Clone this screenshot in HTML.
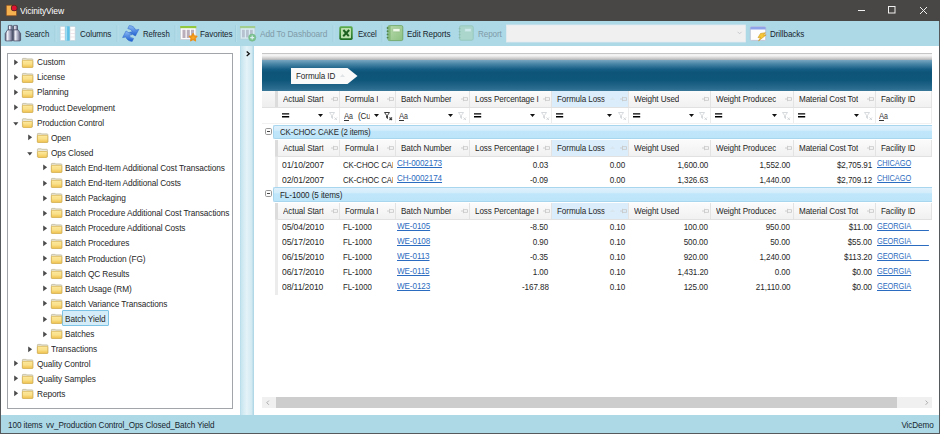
<!DOCTYPE html>
<html><head><meta charset="utf-8"><title>VicinityView</title>
<style>
html,body{margin:0;padding:0;}
body{width:940px;height:434px;overflow:hidden;position:relative;background:#fff;font-family:"Liberation Sans",sans-serif;font-size:9px;color:#272727;letter-spacing:-0.1px;}
.sx{transform:scaleX(0.9);transform-origin:0 50%;}
.sxr{transform:scaleX(0.9);transform-origin:100% 50%;}
.abs{position:absolute;}
svg{position:absolute;overflow:visible;}
#title{left:0;top:0;width:940px;height:20.7px;background:#494745;}
#title .t{left:20px;top:4.8px;color:#fff;font-size:9.5px;line-height:12px;letter-spacing:-0.1px;white-space:nowrap;transform:scaleX(0.895);transform-origin:0 50%;}
#toolbar{left:0;top:20.7px;width:940px;height:25.3px;background:#add8e6;}
.tb{position:absolute;top:7.4px;letter-spacing:-0.1px;transform:scaleX(0.9);transform-origin:0 50%;line-height:12px;white-space:nowrap;color:#17262e;}
.tb.dis{color:#7f9ba8;}
.tbsep{position:absolute;top:4px;width:1px;height:18px;background:#a2cedc;}
#status{left:0;top:415.4px;width:940px;height:19px;background:#add8e6;}
#status span{position:absolute;top:3.6px;line-height:12px;white-space:nowrap;color:#17262e;transform:scaleX(0.905);transform-origin:0 50%;}
#bl{left:0;top:20.7px;width:1px;height:413.3px;background:#55595c;}
#br{left:939px;top:20.7px;width:1px;height:413.3px;background:#55595c;}
#bb{left:0;top:433px;width:940px;height:1px;background:#55595c;}
#tree{left:7px;top:53px;width:224.4px;height:354px;border:1px solid #a2a5aa;background:#fff;}
.ti{position:absolute;line-height:12px;white-space:nowrap;transform:scaleX(0.92);transform-origin:0 50%;}
#sel{left:62px;top:310.4px;width:45px;height:14px;border-radius:1px;border:1px solid #7cc3e6;background:#d4ecf8;}
#split{left:240px;top:46px;width:14px;height:369px;background:linear-gradient(90deg,#b3dbe9 0%,#c9e6f0 10%,#e4f3f8 48%,#d3eaf2 82%,#a9d4e4 100%);}
#gtop{left:262px;top:53px;width:670px;height:7px;background:linear-gradient(180deg,#b4b4b4 0%,#d2d2d2 12%,#fafafa 24%,#ececec 46%,#cbcbcb 78%,#aab0b4 100%);}
#gpanel{left:262px;top:60px;width:670px;height:31px;background:linear-gradient(180deg,#78a6c0 0%,#4b87a8 12%,#155d84 30%,#0e5479 40%,#0f567b 65%,#2a6c8f 92%,#3b7898 100%);}
#chip{left:291px;top:67px;width:54px;height:17px;background:#fbfbfb;}
#chip span{position:absolute;left:5px;top:3px;line-height:12px;white-space:nowrap;}
.hrow{position:absolute;left:262px;width:670px;height:16px;background:linear-gradient(180deg,#fbfbfb 0%,#f1f1f1 100%);border-bottom:1px solid #e1e1e1;}
.hsel{position:absolute;top:0;height:16px;background:#dbedfa;}
.hind{position:absolute;left:0;top:0;width:14px;height:16px;background:linear-gradient(180deg,#f8f8f8,#eeeeee);}
.hind2{position:absolute;left:14px;top:0;width:2px;height:16px;background:#dcdcdc;}
.vs{position:absolute;top:0;width:1px;height:16px;background:#e3e3e3;}
.ht{position:absolute;top:2px;line-height:12px;white-space:nowrap;overflow:hidden;transform:scaleX(0.9);transform-origin:0 50%;}
.frow{position:absolute;left:262px;top:108px;width:670px;height:15px;background:#fff;border-bottom:1px solid #f1f1f1;}
.grow{position:absolute;left:273px;width:659px;height:13px;background:linear-gradient(180deg,#dff1fc 0%,#d4edfb 35%,#bfe6fb 45%,#bde5fa 100%);border:1px solid #a9d6ef;border-right:none;box-sizing:border-box;height:14.3px;border-radius:2px 0 0 2px;}
.grow span{position:absolute;left:6px;top:0px;line-height:12px;white-space:nowrap;transform:scaleX(0.9);transform-origin:0 50%;}
.c{position:absolute;line-height:12px;white-space:nowrap;transform:scaleX(0.9);transform-origin:0 50%;}
.r{text-align:right;transform-origin:100% 50%;}
.lnk{color:#2c6cc0;text-decoration:underline;}
.rowind{position:absolute;left:275px;width:3px;background:#ececec;}
.cellvs{position:absolute;width:1px;background:#f0f0f0;}
#sb{left:262px;top:397px;width:670px;height:11px;background:#f0f0f0;}
#sbt{left:276px;top:397px;width:621px;height:11px;background:#cdcdcd;}
</style></head>
<body>
<div id="title" class="abs"><span class="abs t">VicinityView</span>
<svg style="left:6px;top:4.6px" width="11" height="11" viewBox="0 0 11 11"><rect x="0.3" y="0.3" width="10.2" height="10.4" rx="0.8" fill="#f7b250" stroke="#8a4a1c" stroke-width="0.7"/><circle cx="8.2" cy="3" r="3.3" fill="#4a2820"/><circle cx="8.2" cy="3" r="2.5" fill="#e01232"/></svg>
<svg style="left:855px;top:4px" width="80" height="14" viewBox="0 0 80 14"><path d="M3 6.5h7" stroke="#f0f0f0" stroke-width="1"/><rect x="33.5" y="2.5" width="6.5" height="6.5" fill="none" stroke="#f0f0f0" stroke-width="1"/><path d="M65 3l7 7M72 3l-7 7" stroke="#f0f0f0" stroke-width="1"/></svg>
</div>
<div id="toolbar" class="abs">
<span class="tb" style="left:24.7px;transform:scaleX(0.865)">Search</span>
<span class="tb" style="left:80px">Columns</span>
<span class="tb" style="left:142.5px;transform:scaleX(0.865)">Refresh</span>
<span class="tb" style="left:200px">Favorites</span>
<span class="tb dis" style="left:259.5px;transform:scaleX(0.925)">Add To Dashboard</span>
<span class="tb" style="left:358px;transform:scaleX(0.865)">Excel</span>
<span class="tb" style="left:407px">Edit Reports</span>
<span class="tb dis" style="left:477.5px">Report</span>
<span class="tb" style="left:770px">Drillbacks</span>
</div>
<svg style="left:0;top:0" width="940" height="48" viewBox="0 0 940 48">
<defs>
<linearGradient id="gb" x1="0" x2="1" y1="0" y2="0"><stop offset="0" stop-color="#5d5f7a"/><stop offset="0.3" stop-color="#f0f0f8"/><stop offset="0.5" stop-color="#c3c4d6"/><stop offset="0.75" stop-color="#8c8ea8"/><stop offset="1" stop-color="#4c4e68"/></linearGradient>
<linearGradient id="gr" x1="0" x2="0" y1="0" y2="1"><stop offset="0" stop-color="#8dbdf6"/><stop offset="1" stop-color="#1f5fcf"/></linearGradient>
<linearGradient id="gx" x1="0" x2="0" y1="0" y2="1"><stop offset="0" stop-color="#5fae4e"/><stop offset="1" stop-color="#1d6b1f"/></linearGradient>
<linearGradient id="gn" x1="0" x2="1" y1="0" y2="1"><stop offset="0" stop-color="#b9dcae"/><stop offset="1" stop-color="#8dc081"/></linearGradient>
</defs>
<!-- binoculars -->
<g stroke="#45475f" stroke-width="0.7">
<path d="M8.8 25.4h3q.5 0 .5.5v4.2h-4v-4.2q0-.5.5-.5z" fill="url(#gb)"/>
<path d="M14 25.4h3q.5 0 .5.5v4.2h-4v-4.2q0-.5.5-.5z" fill="url(#gb)"/>
<path d="M7.6 29.9h4.9l.2 2v8.2q0 .8-.8.8h-5.9q-.8 0-.8-.8v-6.6z" fill="url(#gb)"/>
<path d="M18.2 29.9h-4.9l-.2 2v8.2q0 .8.8.8h5.9q.8 0 .8-.8v-6.6z" fill="url(#gb)"/>
</g>
<!-- columns -->
<g>
<rect x="60.2" y="26.5" width="4.9" height="14" rx="0.6" fill="#fefefe" stroke="#c0ced6" stroke-width="0.6"/>
<rect x="70" y="26.5" width="5.2" height="14" rx="0.6" fill="#fefefe" stroke="#c0ced6" stroke-width="0.6"/>
<path d="M60.5 30h4.4M60.5 33.5h4.4M60.5 37h4.4M70.3 30h4.6M70.3 33.5h4.6M70.3 37h4.6" stroke="#e6dbe0" stroke-width="0.7"/>
<rect x="65.5" y="26.3" width="4.1" height="14.4" fill="#5fc0e6"/>
<rect x="65.5" y="26.3" width="1.6" height="14.4" fill="#a2dcf1"/>
</g>
<!-- refresh -->
<g fill="url(#gr)" stroke="#2660c8" stroke-width="0.5" stroke-linejoin="round">
<path d="M129.2 25.6q4.6 0 6.4 4.4l3.2-0.6l-3.4 6.6l-6-3.6l3-0.8q-1.2-2.6-4.6-3z"/>
<path d="M132.2 41.4q-4.6 0-6.4-4.4l-3.2 0.6l3.4-6.6l6 3.6l-3 0.8q1.2 2.6 4.6 3z"/>
</g>
<!-- favorites -->
<g>
<rect x="180.5" y="26.5" width="15.5" height="13" fill="#fbfbfb" stroke="#c9cfd4" stroke-width="0.8"/>
<rect x="180.2" y="26" width="16.1" height="2.2" fill="#92c83e"/>
<rect x="182.5" y="29.8" width="3" height="8.2" fill="#b9aeba"/><rect x="186.8" y="29.8" width="3" height="8.2" fill="#b9aeba"/><rect x="191" y="29.8" width="3" height="8.2" fill="#b9aeba"/>
<path d="M193.1 33.6l1.2 2.4l2.6 0.4l-1.9 1.8l0.5 2.6l-2.4-1.3l-2.4 1.3l0.5-2.6l-1.9-1.8l2.6-0.4z" fill="#f9a422" stroke="#ea8f17" stroke-width="1.3" stroke-linejoin="round"/>
</g>
<!-- add to dashboard (disabled) -->
<g opacity="0.62">
<rect x="240.3" y="26.5" width="14.6" height="12.5" fill="#f4f8fa" stroke="#c0ccd2" stroke-width="0.8"/>
<rect x="240" y="26" width="15.2" height="2.2" fill="#9cca5a"/>
<rect x="242" y="29.8" width="2.8" height="7.6" fill="#bdb6c2"/><rect x="246" y="29.8" width="2.8" height="7.6" fill="#bdb6c2"/><rect x="250" y="29.8" width="2.8" height="7.6" fill="#bdb6c2"/>
<circle cx="252.2" cy="37.6" r="3.6" fill="#5fb75b" stroke="#49a04a" stroke-width="0.5"/>
<path d="M250.2 37.6h4M252.2 35.6v4" stroke="#fff" stroke-width="1.1"/>
</g>
<!-- excel -->
<g>
<rect x="339.3" y="26.3" width="13.4" height="13.6" rx="1.6" fill="url(#gx)"/>
<rect x="341" y="28" width="10" height="10.2" rx="0.8" fill="#b9dfab"/>
<path d="M343.4 30l5.4 6.2M349.2 30l-6 6.2" stroke="#1c5f1e" stroke-width="2"/>
</g>
<!-- edit reports -->
<g>
<rect x="388" y="25.6" width="14.8" height="15" rx="1.4" fill="url(#gn)" stroke="#6aa160" stroke-width="0.8"/>
<rect x="388.4" y="26" width="2.2" height="14.2" fill="#86b97b"/>
<rect x="392.8" y="28.4" width="7.2" height="3.4" rx="0.6" fill="#edf8e8" stroke="#86b67c" stroke-width="0.5"/>
<g fill="#4f8448"><circle cx="387.6" cy="28" r="0.95"/><circle cx="387.6" cy="31.2" r="0.95"/><circle cx="387.6" cy="34.4" r="0.95"/><circle cx="387.6" cy="37.6" r="0.95"/></g>
</g>
<!-- report (disabled) -->
<g opacity="0.5">
<rect x="459.6" y="25.8" width="13.6" height="14.4" rx="1.4" fill="#a9d6b4" stroke="#79b58b" stroke-width="0.8"/>
<rect x="464.6" y="28.4" width="6.6" height="3.4" rx="0.6" fill="#eefaf0" stroke="#9ccaa6" stroke-width="0.5"/>
<g fill="#6c9f7b"><circle cx="459.6" cy="28.6" r="0.9"/><circle cx="459.6" cy="31.6" r="0.9"/><circle cx="459.6" cy="34.6" r="0.9"/><circle cx="459.6" cy="37.6" r="0.9"/></g>
</g>
<!-- combobox -->
<rect x="506.5" y="25" width="239" height="17" fill="#f0f0f0" stroke="#e4ecef" stroke-width="0.8"/>
<path d="M737.6 31.8l2 2l2-2" fill="none" stroke="#bcc2c6" stroke-width="0.8"/>
<!-- drillbacks -->
<g>
<rect x="750.3" y="26.8" width="15.4" height="13.6" rx="1" fill="#fdfdfd" stroke="#b8bdd0" stroke-width="0.8"/>
<path d="M750.3 27.8q0-1 1-1h13.4q1 0 1 1v1.8h-15.4z" fill="#8ea3ea"/>
<path d="M760.5 33.5l5-0.8l-2 2.4l2.6-0.2l-7.5 6l2-3.6l-2.6 0.4z" fill="#f6c737" stroke="#c9951a" stroke-width="0.6"/>
</g>
<!-- separators -->
<g stroke="#a1cedc" stroke-width="0.8"><path d="M55 25v17M117 25v17M175 25v17M235.5 25v17M333 25v17M382 25v17"/></g>
<g stroke="#b9dfea" stroke-width="0.8"><path d="M56 25v17M118 25v17M176 25v17M236.5 25v17M334 25v17M383 25v17"/></g>
</svg>
<div id="tree" class="abs"></div>
<div id="sel" class="abs"></div>
<svg width="0" height="0" style="left:0;top:0"><defs><linearGradient id="fg" x1="0" x2="0" y1="0" y2="1"><stop offset="0" stop-color="#fdeca6"/><stop offset="0.5" stop-color="#f9dc80"/><stop offset="1" stop-color="#f3c654"/></linearGradient></defs></svg>
<svg style="left:13.8px;top:58.9px" width="5" height="7" viewBox="0 0 5 7"><path d="M0.2 0.4l3.9 2.9l-3.9 2.9z" fill="#4b4b4b"/></svg>
<svg style="left:22.0px;top:57.7px" width="11" height="10" viewBox="0 0 11 10"><path d="M0.4 9.2V1q0-.6.6-.6h3.2l.6.5h5.4q.6 0 .6.6V9.2z" fill="#ebe8da" stroke="#b9b190" stroke-width=".7"/><rect x="0.4" y="2.3" width="10.4" height="7.1" rx=".7" fill="url(#fg)" stroke="#d6ad47" stroke-width=".7"/><rect x="1.2" y="5.2" width="8.8" height="1.2" fill="#fbe596" opacity=".7"/></svg>
<span class="ti" style="left:36.5px;top:56.3px">Custom</span>
<svg style="left:13.8px;top:74.0px" width="5" height="7" viewBox="0 0 5 7"><path d="M0.2 0.4l3.9 2.9l-3.9 2.9z" fill="#4b4b4b"/></svg>
<svg style="left:22.0px;top:72.8px" width="11" height="10" viewBox="0 0 11 10"><path d="M0.4 9.2V1q0-.6.6-.6h3.2l.6.5h5.4q.6 0 .6.6V9.2z" fill="#ebe8da" stroke="#b9b190" stroke-width=".7"/><rect x="0.4" y="2.3" width="10.4" height="7.1" rx=".7" fill="url(#fg)" stroke="#d6ad47" stroke-width=".7"/><rect x="1.2" y="5.2" width="8.8" height="1.2" fill="#fbe596" opacity=".7"/></svg>
<span class="ti" style="left:36.5px;top:71.4px">License</span>
<svg style="left:13.8px;top:89.0px" width="5" height="7" viewBox="0 0 5 7"><path d="M0.2 0.4l3.9 2.9l-3.9 2.9z" fill="#4b4b4b"/></svg>
<svg style="left:22.0px;top:87.8px" width="11" height="10" viewBox="0 0 11 10"><path d="M0.4 9.2V1q0-.6.6-.6h3.2l.6.5h5.4q.6 0 .6.6V9.2z" fill="#ebe8da" stroke="#b9b190" stroke-width=".7"/><rect x="0.4" y="2.3" width="10.4" height="7.1" rx=".7" fill="url(#fg)" stroke="#d6ad47" stroke-width=".7"/><rect x="1.2" y="5.2" width="8.8" height="1.2" fill="#fbe596" opacity=".7"/></svg>
<span class="ti" style="left:36.5px;top:86.4px">Planning</span>
<svg style="left:13.8px;top:104.1px" width="5" height="7" viewBox="0 0 5 7"><path d="M0.2 0.4l3.9 2.9l-3.9 2.9z" fill="#4b4b4b"/></svg>
<svg style="left:22.0px;top:102.9px" width="11" height="10" viewBox="0 0 11 10"><path d="M0.4 9.2V1q0-.6.6-.6h3.2l.6.5h5.4q.6 0 .6.6V9.2z" fill="#ebe8da" stroke="#b9b190" stroke-width=".7"/><rect x="0.4" y="2.3" width="10.4" height="7.1" rx=".7" fill="url(#fg)" stroke="#d6ad47" stroke-width=".7"/><rect x="1.2" y="5.2" width="8.8" height="1.2" fill="#fbe596" opacity=".7"/></svg>
<span class="ti" style="left:36.5px;top:101.5px">Product Development</span>
<svg style="left:12.8px;top:121.5px" width="6" height="4" viewBox="0 0 6 4"><path d="M0.2 0.3h5.2l-2.6 3.3z" fill="#454545"/></svg>
<svg style="left:22.0px;top:118.0px" width="11" height="10" viewBox="0 0 11 10"><path d="M0.4 9V1.4q0-.6.6-.6h3.2l.6.5h5q.6 0 .6.6V9z" fill="#ebe8da" stroke="#b9b190" stroke-width=".7"/><path d="M0.5 4.3q0-.8.8-.8h8.2q.8 0 .8.8l-.3 4.4q0 .8-.8.8H1.6q-.8 0-.8-.8z" fill="url(#fg)" stroke="#d8b048" stroke-width=".7"/></svg>
<span class="ti" style="left:36.5px;top:116.6px">Production Control</span>
<svg style="left:28.2px;top:134.2px" width="5" height="7" viewBox="0 0 5 7"><path d="M0.2 0.4l3.9 2.9l-3.9 2.9z" fill="#4b4b4b"/></svg>
<svg style="left:36.5px;top:133.0px" width="11" height="10" viewBox="0 0 11 10"><path d="M0.4 9.2V1q0-.6.6-.6h3.2l.6.5h5.4q.6 0 .6.6V9.2z" fill="#ebe8da" stroke="#b9b190" stroke-width=".7"/><rect x="0.4" y="2.3" width="10.4" height="7.1" rx=".7" fill="url(#fg)" stroke="#d6ad47" stroke-width=".7"/><rect x="1.2" y="5.2" width="8.8" height="1.2" fill="#fbe596" opacity=".7"/></svg>
<span class="ti" style="left:51.0px;top:131.6px">Open</span>
<svg style="left:27.2px;top:151.6px" width="6" height="4" viewBox="0 0 6 4"><path d="M0.2 0.3h5.2l-2.6 3.3z" fill="#454545"/></svg>
<svg style="left:36.5px;top:148.1px" width="11" height="10" viewBox="0 0 11 10"><path d="M0.4 9V1.4q0-.6.6-.6h3.2l.6.5h5q.6 0 .6.6V9z" fill="#ebe8da" stroke="#b9b190" stroke-width=".7"/><path d="M0.5 4.3q0-.8.8-.8h8.2q.8 0 .8.8l-.3 4.4q0 .8-.8.8H1.6q-.8 0-.8-.8z" fill="url(#fg)" stroke="#d8b048" stroke-width=".7"/></svg>
<span class="ti" style="left:51.0px;top:146.7px">Ops Closed</span>
<svg style="left:42.7px;top:164.4px" width="5" height="7" viewBox="0 0 5 7"><path d="M0.2 0.4l3.9 2.9l-3.9 2.9z" fill="#4b4b4b"/></svg>
<svg style="left:50.9px;top:163.2px" width="11" height="10" viewBox="0 0 11 10"><path d="M0.4 9.2V1q0-.6.6-.6h3.2l.6.5h5.4q.6 0 .6.6V9.2z" fill="#ebe8da" stroke="#b9b190" stroke-width=".7"/><rect x="0.4" y="2.3" width="10.4" height="7.1" rx=".7" fill="url(#fg)" stroke="#d6ad47" stroke-width=".7"/><rect x="1.2" y="5.2" width="8.8" height="1.2" fill="#fbe596" opacity=".7"/></svg>
<span class="ti" style="left:65.4px;top:161.8px">Batch End-Item Additional Cost Transactions</span>
<svg style="left:42.7px;top:179.5px" width="5" height="7" viewBox="0 0 5 7"><path d="M0.2 0.4l3.9 2.9l-3.9 2.9z" fill="#4b4b4b"/></svg>
<svg style="left:50.9px;top:178.3px" width="11" height="10" viewBox="0 0 11 10"><path d="M0.4 9.2V1q0-.6.6-.6h3.2l.6.5h5.4q.6 0 .6.6V9.2z" fill="#ebe8da" stroke="#b9b190" stroke-width=".7"/><rect x="0.4" y="2.3" width="10.4" height="7.1" rx=".7" fill="url(#fg)" stroke="#d6ad47" stroke-width=".7"/><rect x="1.2" y="5.2" width="8.8" height="1.2" fill="#fbe596" opacity=".7"/></svg>
<span class="ti" style="left:65.4px;top:176.9px">Batch End-Item Additional Costs</span>
<svg style="left:42.7px;top:194.5px" width="5" height="7" viewBox="0 0 5 7"><path d="M0.2 0.4l3.9 2.9l-3.9 2.9z" fill="#4b4b4b"/></svg>
<svg style="left:50.9px;top:193.3px" width="11" height="10" viewBox="0 0 11 10"><path d="M0.4 9.2V1q0-.6.6-.6h3.2l.6.5h5.4q.6 0 .6.6V9.2z" fill="#ebe8da" stroke="#b9b190" stroke-width=".7"/><rect x="0.4" y="2.3" width="10.4" height="7.1" rx=".7" fill="url(#fg)" stroke="#d6ad47" stroke-width=".7"/><rect x="1.2" y="5.2" width="8.8" height="1.2" fill="#fbe596" opacity=".7"/></svg>
<span class="ti" style="left:65.4px;top:191.9px">Batch Packaging</span>
<svg style="left:42.7px;top:209.6px" width="5" height="7" viewBox="0 0 5 7"><path d="M0.2 0.4l3.9 2.9l-3.9 2.9z" fill="#4b4b4b"/></svg>
<svg style="left:50.9px;top:208.4px" width="11" height="10" viewBox="0 0 11 10"><path d="M0.4 9.2V1q0-.6.6-.6h3.2l.6.5h5.4q.6 0 .6.6V9.2z" fill="#ebe8da" stroke="#b9b190" stroke-width=".7"/><rect x="0.4" y="2.3" width="10.4" height="7.1" rx=".7" fill="url(#fg)" stroke="#d6ad47" stroke-width=".7"/><rect x="1.2" y="5.2" width="8.8" height="1.2" fill="#fbe596" opacity=".7"/></svg>
<span class="ti" style="left:65.4px;top:207.0px">Batch Procedure Additional Cost Transactions</span>
<svg style="left:42.7px;top:224.7px" width="5" height="7" viewBox="0 0 5 7"><path d="M0.2 0.4l3.9 2.9l-3.9 2.9z" fill="#4b4b4b"/></svg>
<svg style="left:50.9px;top:223.5px" width="11" height="10" viewBox="0 0 11 10"><path d="M0.4 9.2V1q0-.6.6-.6h3.2l.6.5h5.4q.6 0 .6.6V9.2z" fill="#ebe8da" stroke="#b9b190" stroke-width=".7"/><rect x="0.4" y="2.3" width="10.4" height="7.1" rx=".7" fill="url(#fg)" stroke="#d6ad47" stroke-width=".7"/><rect x="1.2" y="5.2" width="8.8" height="1.2" fill="#fbe596" opacity=".7"/></svg>
<span class="ti" style="left:65.4px;top:222.1px">Batch Procedure Additional Costs</span>
<svg style="left:42.7px;top:239.7px" width="5" height="7" viewBox="0 0 5 7"><path d="M0.2 0.4l3.9 2.9l-3.9 2.9z" fill="#4b4b4b"/></svg>
<svg style="left:50.9px;top:238.5px" width="11" height="10" viewBox="0 0 11 10"><path d="M0.4 9.2V1q0-.6.6-.6h3.2l.6.5h5.4q.6 0 .6.6V9.2z" fill="#ebe8da" stroke="#b9b190" stroke-width=".7"/><rect x="0.4" y="2.3" width="10.4" height="7.1" rx=".7" fill="url(#fg)" stroke="#d6ad47" stroke-width=".7"/><rect x="1.2" y="5.2" width="8.8" height="1.2" fill="#fbe596" opacity=".7"/></svg>
<span class="ti" style="left:65.4px;top:237.1px">Batch Procedures</span>
<svg style="left:42.7px;top:255.2px" width="5" height="7" viewBox="0 0 5 7"><path d="M0.2 0.4l3.9 2.9l-3.9 2.9z" fill="#4b4b4b"/></svg>
<svg style="left:50.9px;top:254.0px" width="11" height="10" viewBox="0 0 11 10"><path d="M0.4 9.2V1q0-.6.6-.6h3.2l.6.5h5.4q.6 0 .6.6V9.2z" fill="#ebe8da" stroke="#b9b190" stroke-width=".7"/><rect x="0.4" y="2.3" width="10.4" height="7.1" rx=".7" fill="url(#fg)" stroke="#d6ad47" stroke-width=".7"/><rect x="1.2" y="5.2" width="8.8" height="1.2" fill="#fbe596" opacity=".7"/></svg>
<span class="ti" style="left:65.4px;top:252.6px">Batch Production (FG)</span>
<svg style="left:42.7px;top:270.3px" width="5" height="7" viewBox="0 0 5 7"><path d="M0.2 0.4l3.9 2.9l-3.9 2.9z" fill="#4b4b4b"/></svg>
<svg style="left:50.9px;top:269.1px" width="11" height="10" viewBox="0 0 11 10"><path d="M0.4 9.2V1q0-.6.6-.6h3.2l.6.5h5.4q.6 0 .6.6V9.2z" fill="#ebe8da" stroke="#b9b190" stroke-width=".7"/><rect x="0.4" y="2.3" width="10.4" height="7.1" rx=".7" fill="url(#fg)" stroke="#d6ad47" stroke-width=".7"/><rect x="1.2" y="5.2" width="8.8" height="1.2" fill="#fbe596" opacity=".7"/></svg>
<span class="ti" style="left:65.4px;top:267.7px">Batch QC Results</span>
<svg style="left:42.7px;top:285.4px" width="5" height="7" viewBox="0 0 5 7"><path d="M0.2 0.4l3.9 2.9l-3.9 2.9z" fill="#4b4b4b"/></svg>
<svg style="left:50.9px;top:284.1px" width="11" height="10" viewBox="0 0 11 10"><path d="M0.4 9.2V1q0-.6.6-.6h3.2l.6.5h5.4q.6 0 .6.6V9.2z" fill="#ebe8da" stroke="#b9b190" stroke-width=".7"/><rect x="0.4" y="2.3" width="10.4" height="7.1" rx=".7" fill="url(#fg)" stroke="#d6ad47" stroke-width=".7"/><rect x="1.2" y="5.2" width="8.8" height="1.2" fill="#fbe596" opacity=".7"/></svg>
<span class="ti" style="left:65.4px;top:282.8px">Batch Usage (RM)</span>
<svg style="left:42.7px;top:300.4px" width="5" height="7" viewBox="0 0 5 7"><path d="M0.2 0.4l3.9 2.9l-3.9 2.9z" fill="#4b4b4b"/></svg>
<svg style="left:50.9px;top:299.2px" width="11" height="10" viewBox="0 0 11 10"><path d="M0.4 9.2V1q0-.6.6-.6h3.2l.6.5h5.4q.6 0 .6.6V9.2z" fill="#ebe8da" stroke="#b9b190" stroke-width=".7"/><rect x="0.4" y="2.3" width="10.4" height="7.1" rx=".7" fill="url(#fg)" stroke="#d6ad47" stroke-width=".7"/><rect x="1.2" y="5.2" width="8.8" height="1.2" fill="#fbe596" opacity=".7"/></svg>
<span class="ti" style="left:65.4px;top:297.8px">Batch Variance Transactions</span>
<svg style="left:42.7px;top:315.5px" width="5" height="7" viewBox="0 0 5 7"><path d="M0.2 0.4l3.9 2.9l-3.9 2.9z" fill="#4b4b4b"/></svg>
<svg style="left:50.9px;top:314.3px" width="11" height="10" viewBox="0 0 11 10"><path d="M0.4 9.2V1q0-.6.6-.6h3.2l.6.5h5.4q.6 0 .6.6V9.2z" fill="#ebe8da" stroke="#b9b190" stroke-width=".7"/><rect x="0.4" y="2.3" width="10.4" height="7.1" rx=".7" fill="url(#fg)" stroke="#d6ad47" stroke-width=".7"/><rect x="1.2" y="5.2" width="8.8" height="1.2" fill="#fbe596" opacity=".7"/></svg>
<span class="ti" style="left:65.4px;top:312.9px">Batch Yield</span>
<svg style="left:42.7px;top:330.6px" width="5" height="7" viewBox="0 0 5 7"><path d="M0.2 0.4l3.9 2.9l-3.9 2.9z" fill="#4b4b4b"/></svg>
<svg style="left:50.9px;top:329.4px" width="11" height="10" viewBox="0 0 11 10"><path d="M0.4 9.2V1q0-.6.6-.6h3.2l.6.5h5.4q.6 0 .6.6V9.2z" fill="#ebe8da" stroke="#b9b190" stroke-width=".7"/><rect x="0.4" y="2.3" width="10.4" height="7.1" rx=".7" fill="url(#fg)" stroke="#d6ad47" stroke-width=".7"/><rect x="1.2" y="5.2" width="8.8" height="1.2" fill="#fbe596" opacity=".7"/></svg>
<span class="ti" style="left:65.4px;top:328.0px">Batches</span>
<svg style="left:28.2px;top:345.6px" width="5" height="7" viewBox="0 0 5 7"><path d="M0.2 0.4l3.9 2.9l-3.9 2.9z" fill="#4b4b4b"/></svg>
<svg style="left:36.5px;top:344.4px" width="11" height="10" viewBox="0 0 11 10"><path d="M0.4 9.2V1q0-.6.6-.6h3.2l.6.5h5.4q.6 0 .6.6V9.2z" fill="#ebe8da" stroke="#b9b190" stroke-width=".7"/><rect x="0.4" y="2.3" width="10.4" height="7.1" rx=".7" fill="url(#fg)" stroke="#d6ad47" stroke-width=".7"/><rect x="1.2" y="5.2" width="8.8" height="1.2" fill="#fbe596" opacity=".7"/></svg>
<span class="ti" style="left:51.0px;top:343.0px">Transactions</span>
<svg style="left:13.8px;top:360.3px" width="5" height="7" viewBox="0 0 5 7"><path d="M0.2 0.4l3.9 2.9l-3.9 2.9z" fill="#4b4b4b"/></svg>
<svg style="left:22.0px;top:359.1px" width="11" height="10" viewBox="0 0 11 10"><path d="M0.4 9.2V1q0-.6.6-.6h3.2l.6.5h5.4q.6 0 .6.6V9.2z" fill="#ebe8da" stroke="#b9b190" stroke-width=".7"/><rect x="0.4" y="2.3" width="10.4" height="7.1" rx=".7" fill="url(#fg)" stroke="#d6ad47" stroke-width=".7"/><rect x="1.2" y="5.2" width="8.8" height="1.2" fill="#fbe596" opacity=".7"/></svg>
<span class="ti" style="left:36.5px;top:357.7px">Quality Control</span>
<svg style="left:13.8px;top:375.4px" width="5" height="7" viewBox="0 0 5 7"><path d="M0.2 0.4l3.9 2.9l-3.9 2.9z" fill="#4b4b4b"/></svg>
<svg style="left:22.0px;top:374.2px" width="11" height="10" viewBox="0 0 11 10"><path d="M0.4 9.2V1q0-.6.6-.6h3.2l.6.5h5.4q.6 0 .6.6V9.2z" fill="#ebe8da" stroke="#b9b190" stroke-width=".7"/><rect x="0.4" y="2.3" width="10.4" height="7.1" rx=".7" fill="url(#fg)" stroke="#d6ad47" stroke-width=".7"/><rect x="1.2" y="5.2" width="8.8" height="1.2" fill="#fbe596" opacity=".7"/></svg>
<span class="ti" style="left:36.5px;top:372.8px">Quality Samples</span>
<svg style="left:13.8px;top:390.4px" width="5" height="7" viewBox="0 0 5 7"><path d="M0.2 0.4l3.9 2.9l-3.9 2.9z" fill="#4b4b4b"/></svg>
<svg style="left:22.0px;top:389.2px" width="11" height="10" viewBox="0 0 11 10"><path d="M0.4 9.2V1q0-.6.6-.6h3.2l.6.5h5.4q.6 0 .6.6V9.2z" fill="#ebe8da" stroke="#b9b190" stroke-width=".7"/><rect x="0.4" y="2.3" width="10.4" height="7.1" rx=".7" fill="url(#fg)" stroke="#d6ad47" stroke-width=".7"/><rect x="1.2" y="5.2" width="8.8" height="1.2" fill="#fbe596" opacity=".7"/></svg>
<span class="ti" style="left:36.5px;top:387.8px">Reports</span>
<div id="split" class="abs"></div>
<svg style="left:245.6px;top:50.8px" width="5" height="6" viewBox="0 0 5 6"><path d="M0.7 0.6l2.6 2.2l-2.6 2.2" fill="none" stroke="#111" stroke-width="1.3"/></svg>
<div id="gtop" class="abs"></div><div id="gpanel" class="abs"></div>
<svg style="left:291px;top:67.6px" width="67" height="16" viewBox="0 0 67 16"><path d="M0 0h56.5l10 8l-10 8h-56.5z" fill="#fafafa"/></svg>
<span class="c" style="left:296px;top:69.5px">Formula ID</span>
<svg style="left:340px;top:74px" width="5" height="3" viewBox="0 0 5 3"><path d="M0 3l2.5-3l2.5 3z" fill="#e1e4e7"/></svg>
<div class="hrow" style="top:91px;left:262px;width:670px">
<div class="hind"></div><div class="hind2" style="left:13px;width:3px"></div>
<div class="vs" style="left:77.1px"></div>
<span class="ht" style="left:21.0px;max-width:52px">Actual Start</span>
<svg style="left:68.8px;top:5px" width="7" height="6" viewBox="0 0 7 6"><path d="M0 3h2.5M2.5 0.8v4.4M2.5 1.6h4v2.8h-4" fill="none" stroke="#c6c6c6" stroke-width="0.8"/></svg>
<div class="vs" style="left:132.8px"></div>
<span class="ht" style="left:83.0px;max-width:45px">Formula I</span>
<svg style="left:124.5px;top:5px" width="7" height="6" viewBox="0 0 7 6"><path d="M0 3h2.5M2.5 0.8v4.4M2.5 1.6h4v2.8h-4" fill="none" stroke="#c6c6c6" stroke-width="0.8"/></svg>
<div class="vs" style="left:206.8px"></div>
<span class="ht" style="left:138.7px;max-width:65px">Batch Number</span>
<svg style="left:198.5px;top:5px" width="7" height="6" viewBox="0 0 7 6"><path d="M0 3h2.5M2.5 0.8v4.4M2.5 1.6h4v2.8h-4" fill="none" stroke="#c6c6c6" stroke-width="0.8"/></svg>
<div class="vs" style="left:289.3px"></div>
<span class="ht" style="left:212.7px;max-width:75px">Loss Percentage I</span>
<svg style="left:281.0px;top:5px" width="7" height="6" viewBox="0 0 7 6"><path d="M0 3h2.5M2.5 0.8v4.4M2.5 1.6h4v2.8h-4" fill="none" stroke="#c6c6c6" stroke-width="0.8"/></svg>
<div class="hsel" style="left:290.2px;width:76.4px"></div>
<svg style="left:347.5px;top:6px" width="5" height="3" viewBox="0 0 5 3"><path d="M0 3l2.5-3l2.5 3z" fill="#d9e6ef"/></svg>
<div class="vs" style="left:366.1px"></div>
<span class="ht" style="left:295.2px;max-width:68px">Formula Loss</span>
<svg style="left:357.8px;top:5px" width="7" height="6" viewBox="0 0 7 6"><path d="M0 3h2.5M2.5 0.8v4.4M2.5 1.6h4v2.8h-4" fill="none" stroke="#c6c6c6" stroke-width="0.8"/></svg>
<div class="vs" style="left:447.9px"></div>
<span class="ht" style="left:372.0px;max-width:74px">Weight Used</span>
<svg style="left:439.6px;top:5px" width="7" height="6" viewBox="0 0 7 6"><path d="M0 3h2.5M2.5 0.8v4.4M2.5 1.6h4v2.8h-4" fill="none" stroke="#c6c6c6" stroke-width="0.8"/></svg>
<div class="vs" style="left:530.9px"></div>
<span class="ht" style="left:453.8px;max-width:75px">Weight Producec</span>
<svg style="left:522.6px;top:5px" width="7" height="6" viewBox="0 0 7 6"><path d="M0 3h2.5M2.5 0.8v4.4M2.5 1.6h4v2.8h-4" fill="none" stroke="#c6c6c6" stroke-width="0.8"/></svg>
<div class="vs" style="left:612.8px"></div>
<span class="ht" style="left:536.8px;max-width:74px">Material Cost Tot</span>
<svg style="left:604.5px;top:5px" width="7" height="6" viewBox="0 0 7 6"><path d="M0 3h2.5M2.5 0.8v4.4M2.5 1.6h4v2.8h-4" fill="none" stroke="#c6c6c6" stroke-width="0.8"/></svg>
<div class="vs" style="left:669.1px"></div>
<span class="ht" style="left:618.7px;max-width:60px">Facility ID</span>
</div>
<div class="frow">
<div class="vs" style="left:77.1px;height:15px;background:#ececec"></div>
<svg style="left:19.8px;top:5.4px" width="8" height="5" viewBox="0 0 8 5"><path d="M0 0.9h7.2M0 3.7h7.2" stroke="#000" stroke-width="1.4"/></svg>
<svg style="left:56.0px;top:6px" width="5" height="3" viewBox="0 0 5 3"><path d="M0 0h5l-2.5 3z" fill="#111"/></svg>
<svg style="left:66.5px;top:4.2px" width="9" height="9" viewBox="0 0 9 9"><path d="M0.5 0.5h5l-2 2.8v3.2l-1 -0.8v-2.4z" fill="none" stroke="#cdd1d4" stroke-width="0.8"/><path d="M5.5 5.5l2.5 2.5M8 5.5l-2.5 2.5" stroke="#cdd1d4" stroke-width="0.9"/></svg>
<div class="vs" style="left:132.8px;height:15px;background:#ececec"></div>
<span class="c" style="left:81.5px;top:1.5px;font-size:9.5px;letter-spacing:-0.3px;color:#333;transform:scaleX(0.82)"><u>A</u><span style="font-size:8.5px">a</span></span>
<span class="c" style="left:95.5px;top:1.5px;max-width:13px;overflow:hidden">(Cu</span>
<svg style="left:111.7px;top:6px" width="5" height="3" viewBox="0 0 5 3"><path d="M0 0h5l-2.5 3z" fill="#111"/></svg>
<svg style="left:122.2px;top:4.2px" width="9" height="9" viewBox="0 0 9 9"><path d="M0.5 0.5h5l-2 2.8v3.2l-1 -0.8v-2.4z" fill="none" stroke="#3d3d3d" stroke-width="1"/><path d="M5.5 5.5l2.5 2.5M8 5.5l-2.5 2.5" stroke="#3d3d3d" stroke-width="1.1"/></svg>
<div class="vs" style="left:206.8px;height:15px;background:#ececec"></div>
<span class="c" style="left:137.2px;top:1.5px;font-size:9.5px;letter-spacing:-0.3px;color:#333;transform:scaleX(0.82)"><u>A</u><span style="font-size:8.5px">a</span></span>
<svg style="left:185.7px;top:6px" width="5" height="3" viewBox="0 0 5 3"><path d="M0 0h5l-2.5 3z" fill="#111"/></svg>
<svg style="left:196.2px;top:4.2px" width="9" height="9" viewBox="0 0 9 9"><path d="M0.5 0.5h5l-2 2.8v3.2l-1 -0.8v-2.4z" fill="none" stroke="#cdd1d4" stroke-width="0.8"/><path d="M5.5 5.5l2.5 2.5M8 5.5l-2.5 2.5" stroke="#cdd1d4" stroke-width="0.9"/></svg>
<div class="vs" style="left:289.3px;height:15px;background:#ececec"></div>
<svg style="left:211.5px;top:5.4px" width="8" height="5" viewBox="0 0 8 5"><path d="M0 0.9h7.2M0 3.7h7.2" stroke="#000" stroke-width="1.4"/></svg>
<svg style="left:268.2px;top:6px" width="5" height="3" viewBox="0 0 5 3"><path d="M0 0h5l-2.5 3z" fill="#111"/></svg>
<svg style="left:278.7px;top:4.2px" width="9" height="9" viewBox="0 0 9 9"><path d="M0.5 0.5h5l-2 2.8v3.2l-1 -0.8v-2.4z" fill="none" stroke="#cdd1d4" stroke-width="0.8"/><path d="M5.5 5.5l2.5 2.5M8 5.5l-2.5 2.5" stroke="#cdd1d4" stroke-width="0.9"/></svg>
<div class="vs" style="left:366.1px;height:15px;background:#ececec"></div>
<svg style="left:294.0px;top:5.4px" width="8" height="5" viewBox="0 0 8 5"><path d="M0 0.9h7.2M0 3.7h7.2" stroke="#000" stroke-width="1.4"/></svg>
<svg style="left:345.0px;top:6px" width="5" height="3" viewBox="0 0 5 3"><path d="M0 0h5l-2.5 3z" fill="#111"/></svg>
<svg style="left:355.5px;top:4.2px" width="9" height="9" viewBox="0 0 9 9"><path d="M0.5 0.5h5l-2 2.8v3.2l-1 -0.8v-2.4z" fill="none" stroke="#cdd1d4" stroke-width="0.8"/><path d="M5.5 5.5l2.5 2.5M8 5.5l-2.5 2.5" stroke="#cdd1d4" stroke-width="0.9"/></svg>
<div class="vs" style="left:447.9px;height:15px;background:#ececec"></div>
<svg style="left:370.8px;top:5.4px" width="8" height="5" viewBox="0 0 8 5"><path d="M0 0.9h7.2M0 3.7h7.2" stroke="#000" stroke-width="1.4"/></svg>
<svg style="left:426.8px;top:6px" width="5" height="3" viewBox="0 0 5 3"><path d="M0 0h5l-2.5 3z" fill="#111"/></svg>
<svg style="left:437.3px;top:4.2px" width="9" height="9" viewBox="0 0 9 9"><path d="M0.5 0.5h5l-2 2.8v3.2l-1 -0.8v-2.4z" fill="none" stroke="#cdd1d4" stroke-width="0.8"/><path d="M5.5 5.5l2.5 2.5M8 5.5l-2.5 2.5" stroke="#cdd1d4" stroke-width="0.9"/></svg>
<div class="vs" style="left:530.9px;height:15px;background:#ececec"></div>
<svg style="left:452.6px;top:5.4px" width="8" height="5" viewBox="0 0 8 5"><path d="M0 0.9h7.2M0 3.7h7.2" stroke="#000" stroke-width="1.4"/></svg>
<svg style="left:509.8px;top:6px" width="5" height="3" viewBox="0 0 5 3"><path d="M0 0h5l-2.5 3z" fill="#111"/></svg>
<svg style="left:520.3px;top:4.2px" width="9" height="9" viewBox="0 0 9 9"><path d="M0.5 0.5h5l-2 2.8v3.2l-1 -0.8v-2.4z" fill="none" stroke="#cdd1d4" stroke-width="0.8"/><path d="M5.5 5.5l2.5 2.5M8 5.5l-2.5 2.5" stroke="#cdd1d4" stroke-width="0.9"/></svg>
<div class="vs" style="left:612.8px;height:15px;background:#ececec"></div>
<svg style="left:535.6px;top:5.4px" width="8" height="5" viewBox="0 0 8 5"><path d="M0 0.9h7.2M0 3.7h7.2" stroke="#000" stroke-width="1.4"/></svg>
<svg style="left:591.7px;top:6px" width="5" height="3" viewBox="0 0 5 3"><path d="M0 0h5l-2.5 3z" fill="#111"/></svg>
<svg style="left:602.2px;top:4.2px" width="9" height="9" viewBox="0 0 9 9"><path d="M0.5 0.5h5l-2 2.8v3.2l-1 -0.8v-2.4z" fill="none" stroke="#cdd1d4" stroke-width="0.8"/><path d="M5.5 5.5l2.5 2.5M8 5.5l-2.5 2.5" stroke="#cdd1d4" stroke-width="0.9"/></svg>
<div class="vs" style="left:669.1px;height:15px;background:#ececec"></div>
<span class="c" style="left:617.2px;top:1.5px;font-size:9.5px;letter-spacing:-0.3px;color:#333;transform:scaleX(0.82)"><u>A</u><span style="font-size:8.5px">a</span></span>
</div>
<svg style="left:265px;top:127.7px" width="7" height="7" viewBox="0 0 7 7"><rect x="0.5" y="0.5" width="6" height="6" rx="1.2" fill="#fdfdfd" stroke="#8c8c8c" stroke-width="0.9"/><path d="M2 3.5h3" stroke="#333" stroke-width="0.9"/></svg>
<div class="grow" style="top:124.7px"><span style="transform:scaleX(0.868);top:0.2px">CK-CHOC CAKE (2 items)</span></div>
<div class="hrow" style="top:140px;left:275px;width:657px">
<div class="hind2" style="left:0;width:3px"></div>
<div class="vs" style="left:64.1px"></div>
<span class="ht" style="left:8.0px;max-width:52px">Actual Start</span>
<svg style="left:55.8px;top:5px" width="7" height="6" viewBox="0 0 7 6"><path d="M0 3h2.5M2.5 0.8v4.4M2.5 1.6h4v2.8h-4" fill="none" stroke="#c6c6c6" stroke-width="0.8"/></svg>
<div class="vs" style="left:119.8px"></div>
<span class="ht" style="left:70.0px;max-width:45px">Formula I</span>
<svg style="left:111.5px;top:5px" width="7" height="6" viewBox="0 0 7 6"><path d="M0 3h2.5M2.5 0.8v4.4M2.5 1.6h4v2.8h-4" fill="none" stroke="#c6c6c6" stroke-width="0.8"/></svg>
<div class="vs" style="left:193.8px"></div>
<span class="ht" style="left:125.7px;max-width:65px">Batch Number</span>
<svg style="left:185.5px;top:5px" width="7" height="6" viewBox="0 0 7 6"><path d="M0 3h2.5M2.5 0.8v4.4M2.5 1.6h4v2.8h-4" fill="none" stroke="#c6c6c6" stroke-width="0.8"/></svg>
<div class="vs" style="left:276.3px"></div>
<span class="ht" style="left:199.7px;max-width:75px">Loss Percentage I</span>
<svg style="left:268.0px;top:5px" width="7" height="6" viewBox="0 0 7 6"><path d="M0 3h2.5M2.5 0.8v4.4M2.5 1.6h4v2.8h-4" fill="none" stroke="#c6c6c6" stroke-width="0.8"/></svg>
<div class="hsel" style="left:277.2px;width:76.4px"></div>
<svg style="left:334.5px;top:6px" width="5" height="3" viewBox="0 0 5 3"><path d="M0 3l2.5-3l2.5 3z" fill="#d9e6ef"/></svg>
<div class="vs" style="left:353.1px"></div>
<span class="ht" style="left:282.2px;max-width:68px">Formula Loss</span>
<svg style="left:344.8px;top:5px" width="7" height="6" viewBox="0 0 7 6"><path d="M0 3h2.5M2.5 0.8v4.4M2.5 1.6h4v2.8h-4" fill="none" stroke="#c6c6c6" stroke-width="0.8"/></svg>
<div class="vs" style="left:434.9px"></div>
<span class="ht" style="left:359.0px;max-width:74px">Weight Used</span>
<svg style="left:426.6px;top:5px" width="7" height="6" viewBox="0 0 7 6"><path d="M0 3h2.5M2.5 0.8v4.4M2.5 1.6h4v2.8h-4" fill="none" stroke="#c6c6c6" stroke-width="0.8"/></svg>
<div class="vs" style="left:517.9px"></div>
<span class="ht" style="left:440.8px;max-width:75px">Weight Producec</span>
<svg style="left:509.6px;top:5px" width="7" height="6" viewBox="0 0 7 6"><path d="M0 3h2.5M2.5 0.8v4.4M2.5 1.6h4v2.8h-4" fill="none" stroke="#c6c6c6" stroke-width="0.8"/></svg>
<div class="vs" style="left:599.8px"></div>
<span class="ht" style="left:523.8px;max-width:74px">Material Cost Tot</span>
<svg style="left:591.5px;top:5px" width="7" height="6" viewBox="0 0 7 6"><path d="M0 3h2.5M2.5 0.8v4.4M2.5 1.6h4v2.8h-4" fill="none" stroke="#c6c6c6" stroke-width="0.8"/></svg>
<div class="vs" style="left:656.1px"></div>
<span class="ht" style="left:605.7px;max-width:60px">Facility ID</span>
</div>
<span class="c" style="left:282px;top:158.5px;transform:scaleX(0.95)">01/10/2007</span>
<span class="c" style="left:342.8px;top:158.5px;max-width:57px;overflow:hidden;transform:scaleX(0.875)">CK-CHOC CAKE</span>
<span class="c lnk" style="left:397px;top:156.9px">CH-0002173</span>
<span class="c r" style="right:391.5px;top:158.5px">0.03</span>
<span class="c r" style="right:314.5px;top:158.5px">0.00</span>
<span class="c r" style="right:232.0px;top:158.5px">1,600.00</span>
<span class="c r" style="right:150.0px;top:158.5px">1,552.00</span>
<span class="c r" style="right:68.0px;top:158.5px">$2,705.91</span>
<span class="c lnk" style="left:877px;top:157.0px;transform:scaleX(0.825)">CHICAGO</span>
<span class="c" style="left:282px;top:173.5px;transform:scaleX(0.95)">02/01/2007</span>
<span class="c" style="left:342.8px;top:173.5px;max-width:57px;overflow:hidden;transform:scaleX(0.875)">CK-CHOC CAKE</span>
<span class="c lnk" style="left:397px;top:171.9px">CH-0002174</span>
<span class="c r" style="right:391.5px;top:173.5px">-0.09</span>
<span class="c r" style="right:314.5px;top:173.5px">0.00</span>
<span class="c r" style="right:232.0px;top:173.5px">1,326.63</span>
<span class="c r" style="right:150.0px;top:173.5px">1,440.00</span>
<span class="c r" style="right:68.0px;top:173.5px">$2,709.12</span>
<span class="c lnk" style="left:877px;top:172.0px;transform:scaleX(0.825)">CHICAGO</span>
<svg style="left:265px;top:190.3px" width="7" height="7" viewBox="0 0 7 7"><rect x="0.5" y="0.5" width="6" height="6" rx="1.2" fill="#fdfdfd" stroke="#8c8c8c" stroke-width="0.9"/><path d="M2 3.5h3" stroke="#333" stroke-width="0.9"/></svg>
<div class="grow" style="top:187.3px"><span style="transform:scaleX(0.9);top:0.7px">FL-1000 (5 items)</span></div>
<div class="hrow" style="top:203px;left:275px;width:657px">
<div class="hind2" style="left:0;width:3px"></div>
<div class="vs" style="left:64.1px"></div>
<span class="ht" style="left:8.0px;max-width:52px">Actual Start</span>
<svg style="left:55.8px;top:5px" width="7" height="6" viewBox="0 0 7 6"><path d="M0 3h2.5M2.5 0.8v4.4M2.5 1.6h4v2.8h-4" fill="none" stroke="#c6c6c6" stroke-width="0.8"/></svg>
<div class="vs" style="left:119.8px"></div>
<span class="ht" style="left:70.0px;max-width:45px">Formula I</span>
<svg style="left:111.5px;top:5px" width="7" height="6" viewBox="0 0 7 6"><path d="M0 3h2.5M2.5 0.8v4.4M2.5 1.6h4v2.8h-4" fill="none" stroke="#c6c6c6" stroke-width="0.8"/></svg>
<div class="vs" style="left:193.8px"></div>
<span class="ht" style="left:125.7px;max-width:65px">Batch Number</span>
<svg style="left:185.5px;top:5px" width="7" height="6" viewBox="0 0 7 6"><path d="M0 3h2.5M2.5 0.8v4.4M2.5 1.6h4v2.8h-4" fill="none" stroke="#c6c6c6" stroke-width="0.8"/></svg>
<div class="vs" style="left:276.3px"></div>
<span class="ht" style="left:199.7px;max-width:75px">Loss Percentage I</span>
<svg style="left:268.0px;top:5px" width="7" height="6" viewBox="0 0 7 6"><path d="M0 3h2.5M2.5 0.8v4.4M2.5 1.6h4v2.8h-4" fill="none" stroke="#c6c6c6" stroke-width="0.8"/></svg>
<div class="hsel" style="left:277.2px;width:76.4px"></div>
<svg style="left:334.5px;top:6px" width="5" height="3" viewBox="0 0 5 3"><path d="M0 3l2.5-3l2.5 3z" fill="#d9e6ef"/></svg>
<div class="vs" style="left:353.1px"></div>
<span class="ht" style="left:282.2px;max-width:68px">Formula Loss</span>
<svg style="left:344.8px;top:5px" width="7" height="6" viewBox="0 0 7 6"><path d="M0 3h2.5M2.5 0.8v4.4M2.5 1.6h4v2.8h-4" fill="none" stroke="#c6c6c6" stroke-width="0.8"/></svg>
<div class="vs" style="left:434.9px"></div>
<span class="ht" style="left:359.0px;max-width:74px">Weight Used</span>
<svg style="left:426.6px;top:5px" width="7" height="6" viewBox="0 0 7 6"><path d="M0 3h2.5M2.5 0.8v4.4M2.5 1.6h4v2.8h-4" fill="none" stroke="#c6c6c6" stroke-width="0.8"/></svg>
<div class="vs" style="left:517.9px"></div>
<span class="ht" style="left:440.8px;max-width:75px">Weight Producec</span>
<svg style="left:509.6px;top:5px" width="7" height="6" viewBox="0 0 7 6"><path d="M0 3h2.5M2.5 0.8v4.4M2.5 1.6h4v2.8h-4" fill="none" stroke="#c6c6c6" stroke-width="0.8"/></svg>
<div class="vs" style="left:599.8px"></div>
<span class="ht" style="left:523.8px;max-width:74px">Material Cost Tot</span>
<svg style="left:591.5px;top:5px" width="7" height="6" viewBox="0 0 7 6"><path d="M0 3h2.5M2.5 0.8v4.4M2.5 1.6h4v2.8h-4" fill="none" stroke="#c6c6c6" stroke-width="0.8"/></svg>
<div class="vs" style="left:656.1px"></div>
<span class="ht" style="left:605.7px;max-width:60px">Facility ID</span>
</div>
<span class="c" style="left:282px;top:221.3px;transform:scaleX(0.95)">05/04/2010</span>
<span class="c" style="left:342.8px;top:221.3px;max-width:57px;overflow:hidden;transform:scaleX(0.875)">FL-1000</span>
<span class="c lnk" style="left:397px;top:219.7px">WE-0105</span>
<span class="c r" style="right:391.5px;top:221.3px">-8.50</span>
<span class="c r" style="right:314.5px;top:221.3px">0.10</span>
<span class="c r" style="right:232.0px;top:221.3px">100.00</span>
<span class="c r" style="right:150.0px;top:221.3px">950.00</span>
<span class="c r" style="right:68.0px;top:221.3px">$11.00</span>
<span class="c lnk" style="left:877px;top:219.8px;transform:scaleX(0.825)">GEORGIA&nbsp;&nbsp;&nbsp;&nbsp;&nbsp;&nbsp;&nbsp;&nbsp;&nbsp;</span>
<span class="c" style="left:282px;top:236.3px;transform:scaleX(0.95)">05/17/2010</span>
<span class="c" style="left:342.8px;top:236.3px;max-width:57px;overflow:hidden;transform:scaleX(0.875)">FL-1000</span>
<span class="c lnk" style="left:397px;top:234.7px">WE-0108</span>
<span class="c r" style="right:391.5px;top:236.3px">0.90</span>
<span class="c r" style="right:314.5px;top:236.3px">0.10</span>
<span class="c r" style="right:232.0px;top:236.3px">500.00</span>
<span class="c r" style="right:150.0px;top:236.3px">50.00</span>
<span class="c r" style="right:68.0px;top:236.3px">$55.00</span>
<span class="c lnk" style="left:877px;top:234.8px;transform:scaleX(0.825)">GEORGIA&nbsp;&nbsp;&nbsp;&nbsp;&nbsp;&nbsp;&nbsp;&nbsp;&nbsp;</span>
<span class="c" style="left:282px;top:251.3px;transform:scaleX(0.95)">06/15/2010</span>
<span class="c" style="left:342.8px;top:251.3px;max-width:57px;overflow:hidden;transform:scaleX(0.875)">FL-1000</span>
<span class="c lnk" style="left:397px;top:249.7px">WE-0113</span>
<span class="c r" style="right:391.5px;top:251.3px">-0.35</span>
<span class="c r" style="right:314.5px;top:251.3px">0.10</span>
<span class="c r" style="right:232.0px;top:251.3px">920.00</span>
<span class="c r" style="right:150.0px;top:251.3px">1,240.00</span>
<span class="c r" style="right:68.0px;top:251.3px">$113.20</span>
<span class="c lnk" style="left:877px;top:249.8px;transform:scaleX(0.825)">GEORGIA&nbsp;&nbsp;&nbsp;&nbsp;&nbsp;&nbsp;&nbsp;&nbsp;&nbsp;</span>
<span class="c" style="left:282px;top:266.3px;transform:scaleX(0.95)">06/17/2010</span>
<span class="c" style="left:342.8px;top:266.3px;max-width:57px;overflow:hidden;transform:scaleX(0.875)">FL-1000</span>
<span class="c lnk" style="left:397px;top:264.7px">WE-0115</span>
<span class="c r" style="right:391.5px;top:266.3px">1.00</span>
<span class="c r" style="right:314.5px;top:266.3px">0.10</span>
<span class="c r" style="right:232.0px;top:266.3px">1,431.20</span>
<span class="c r" style="right:150.0px;top:266.3px">0.00</span>
<span class="c r" style="right:68.0px;top:266.3px">$0.00</span>
<span class="c lnk" style="left:877px;top:264.8px;transform:scaleX(0.825)">GEORGIA</span>
<span class="c" style="left:282px;top:281.3px;transform:scaleX(0.95)">08/11/2010</span>
<span class="c" style="left:342.8px;top:281.3px;max-width:57px;overflow:hidden;transform:scaleX(0.875)">FL-1000</span>
<span class="c lnk" style="left:397px;top:279.7px">WE-0123</span>
<span class="c r" style="right:391.5px;top:281.3px">-167.88</span>
<span class="c r" style="right:314.5px;top:281.3px">0.10</span>
<span class="c r" style="right:232.0px;top:281.3px">125.00</span>
<span class="c r" style="right:150.0px;top:281.3px">21,110.00</span>
<span class="c r" style="right:68.0px;top:281.3px">$0.00</span>
<span class="c lnk" style="left:877px;top:279.8px;transform:scaleX(0.825)">GEORGIA</span>
<div class="rowind" style="top:157px;height:30px"></div><div class="rowind" style="top:220px;height:75px"></div>
<div id="sb" class="abs"></div><div id="sbt" class="abs"></div>
<svg style="left:266px;top:400.2px" width="4" height="6" viewBox="0 0 4 6"><path d="M2.9 0.6l-2.1 2.1l2.1 2.1" fill="none" stroke="#8f8f8f" stroke-width="0.7"/></svg>
<svg style="left:925px;top:400.2px" width="4" height="6" viewBox="0 0 4 6"><path d="M0.6 0.6l2.1 2.1l-2.1 2.1" fill="none" stroke="#8f8f8f" stroke-width="0.7"/></svg>
<div id="status" class="abs"><span style="left:7.5px">100 items</span><span style="left:46px">vv_Production Control_Ops Closed_Batch Yield</span><span style="right:6.4px;transform-origin:100% 50%">VicDemo</span></div>
<div id="bl" class="abs"></div><div id="br" class="abs"></div><div id="bb" class="abs"></div>
</body></html>
